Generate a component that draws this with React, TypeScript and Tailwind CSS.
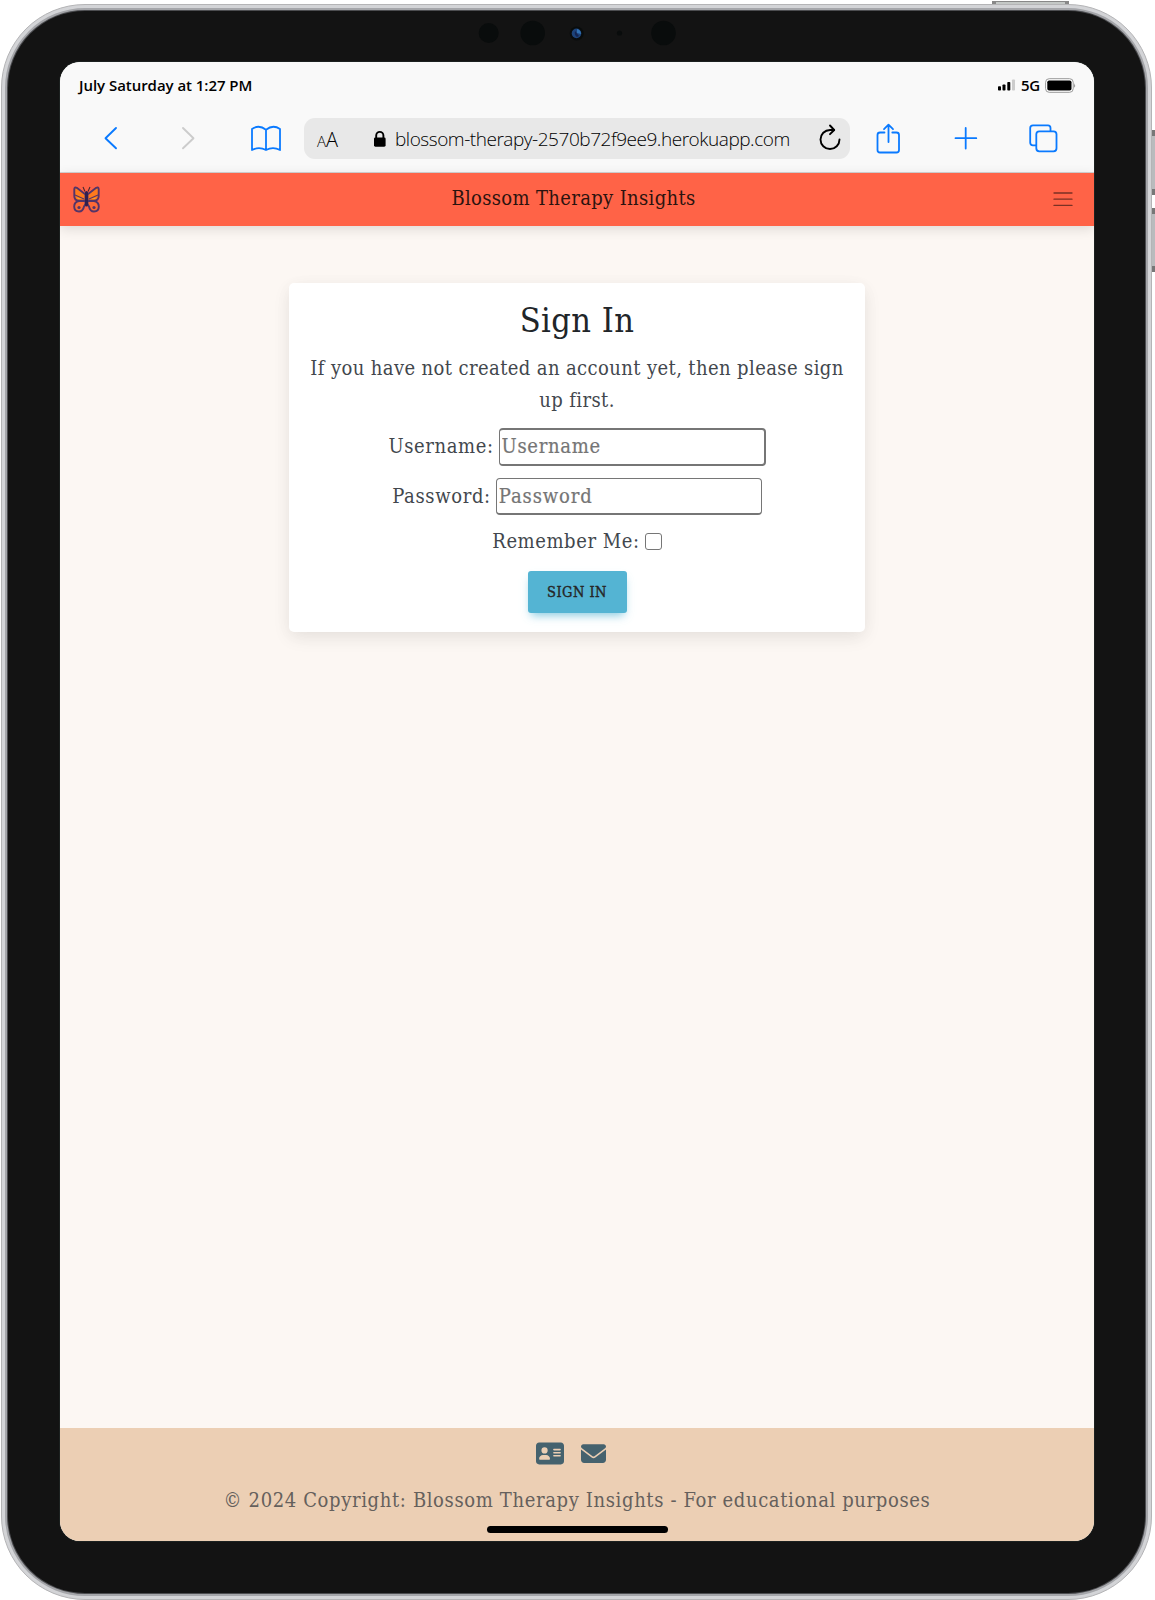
import { FaAddressCard, FaEnvelope } from "react-icons/fa6";

const serif = "font-['DejaVu_Serif_Condensed','DejaVu_Serif',serif] [font-stretch:condensed]";

function Butterfly() {
  return (
    <svg className="h-[27px] w-[27px]" viewBox="0 0 27 27" fill="none" strokeLinejoin="round">
      <g stroke="#553468" strokeWidth="1.9">
        <path d="M12.5 8.5L3.8 1.8Q1.3 .8 1.3 3.2V10Q1.3 14.5 6 14.8H12.5Z" fill="#ff7a1c" />
        <path d="M14.5 8.5L23.2 1.8Q25.7 .8 25.7 3.2V10Q25.7 14.5 21 14.8H14.5Z" fill="#ff7a1c" />
        <path d="M12.5 15H6Q1.2 16 1.2 20.5Q1.2 25.5 6 25.5Q10 25.5 11 20.5L12.5 18Z" fill="#ff6a35" />
        <path d="M14.5 15H21Q25.8 16 25.8 20.5Q25.8 25.5 21 25.5Q17 25.5 16 20.5L14.5 18Z" fill="#ff6a35" />
        <path d="M2 9L11 13M25 9L16 13" strokeWidth="1.1" />
      </g>
      <path d="M4 11.5L9 13H5ZM23 11.5L18 13H22Z" fill="#ffa51e" />
      <path d="M12 5.5L10 1M15 5.5L17 1" stroke="#4a2830" strokeWidth="1.1" />
      <rect x="12" y="5" width="3" height="15.5" rx="1.5" fill="#30204f" />
      <circle cx="6" cy="21.5" r="1.6" fill="#553468" />
      <circle cx="21" cy="21.5" r="1.6" fill="#553468" />
    </svg>
  );
}

function Cameras() {
  return (
    <svg className="absolute left-[470px] top-[14px] h-[38px] w-[216px]" viewBox="470 14 216 38">
      <g fill="#090c0c">
        <circle cx="488.7" cy="33" r="10" />
        <circle cx="532.7" cy="33" r="12.3" />
        <circle cx="576.7" cy="33.5" r="7" />
        <circle cx="619.5" cy="33" r="2.6" />
        <circle cx="663.5" cy="33" r="12.3" />
      </g>
      <circle cx="576.5" cy="33.4" r="4.8" fill="#1d4379" />
      <path d="M577 33L577 29Q581 30 581 34Z" fill="#3172b4" />
      <path d="M575 31Q574 35 577 37L579 36Z" fill="#14244f" />
    </svg>
  );
}

function StatusBar() {
  return (
    <div className="flex h-[46px] items-center justify-between pl-[19px] pr-[18px] font-['Open_Sans',sans-serif] text-[15px] font-semibold text-black">
      <span className="tracking-[-0.04px]">July Saturday at 1:27 PM</span>
      <div className="flex items-center">
        <svg className="h-[12px] w-[18px]" viewBox="0 0 18 12">
          <rect x="0" y="7.3" width="3" height="4.2" rx=".8" />
          <rect x="4.5" y="5.5" width="3" height="6" rx=".8" />
          <rect x="9.3" y="3" width="3" height="8.500" rx=".8" />
          <rect x="14" y="0.5" width="3" height="11" rx=".8" fill="#ccc" />
        </svg>
        <span className="ml-[5px] mr-[5px] text-[15px] tracking-[-0.2px]">5G</span>
        <svg className="h-[15px] w-[31px]" viewBox="0 0 31 15">
          <rect x=".6" y=".7" width="27.6" height="13.6" rx="3.6" fill="#fff" stroke="#999" />
          <rect x="2.3" y="2.5" width="24.2" height="10" rx="1.8" />
          <path d="M29.2 5.2Q31 7.5 29.2 9.8Z" fill="#888" />
        </svg>
      </div>
    </div>
  );
}

function Toolbar() {
  return (
    <div className="mt-[2px] flex h-[63px] items-start border-b border-[#d4d2d2] font-['Open_Sans',sans-serif] font-light text-black">
      <svg className="mt-[7px] h-[40px] w-[244px]" viewBox="60 117 244 40" fill="none" strokeLinecap="round" strokeLinejoin="round" strokeWidth="1.9">
        <path d="M116 128L105.500 138.200L116 148.300" stroke="#0a7aff" />
        <path d="M183 128L193.500 138.200L183 148.300" stroke="#ccc" />
        <path d="M266 129.700Q259 124.200 252 129V150Q259 146.300 266 150Q273 146.300 280 150V129Q273 124.200 266 129.700ZM266 129.700V149.500" stroke="#0a7aff" strokeWidth="1.8" />
      </svg>
      <div className="mt-[8px] flex h-[41px] w-[546px] items-center rounded-[11px] bg-[#e8e8e8]">
        <span className="ml-[13px] mt-[2px] flex w-[23px] items-baseline leading-none"><span className="text-[15px]">A</span><span className="text-[20px]">A</span></span>
        <svg className="ml-[33px] h-[18px] w-[14px]" viewBox="0 0 14 18">
          <path d="M3.200 8V5.500a3.600 3.600 0 0 1 7.200 0V8" fill="none" stroke="#000" strokeWidth="1.900" />
          <rect x="1" y="7.400" width="11.600" height="9.300" rx="1.400" />
        </svg>
        <span className="ml-[8px] mt-[2px] w-[396px] whitespace-nowrap text-[19px] tracking-[-0.46px]">blossom-therapy-2570b72f9ee9.herokuapp.com</span>
        <svg className="-mt-[4px] ml-[27px] h-[26px] w-[24px]" viewBox="0 0 24 26" fill="none" stroke="#000" strokeWidth="1.900" strokeLinecap="round" strokeLinejoin="round">
          <path d="M16 6H12A9.500 9.500 0 1 0 21.500 15.500" />
          <path d="M12 1.500L16.200 6L12 10.200" />
        </svg>
      </div>
      <svg className="mt-[7px] h-[40px] w-[244px]" viewBox="850 117 244 40" fill="none" stroke="#0a7aff" strokeWidth="1.800" strokeLinecap="round" strokeLinejoin="round">
        <path d="M884.500 132.500H880Q877.500 132.500 877.500 135V150Q877.500 152.500 880 152.500H896.500Q899 152.500 899 150V135Q899 132.500 896.500 132.500H892.300M888.500 142V125M884 129.200L888.500 124.700L893 129.200" />
        <path d="M955.500 138.200H976.300M965.700 128V148.500" />
        <path d="M1036 145.300H1033Q1030.200 145.300 1030.200 142.500V128Q1030.200 125.400 1033 125.400H1048Q1050.500 125.400 1050.500 128V131" />
        <rect x="1036.300" y="131.300" width="20.200" height="20" rx="3" />
      </svg>
    </div>
  );
}

function SignInCard() {
  return (
    <section className="flex h-[349px] w-[576px] flex-col items-center rounded-[5px] bg-white text-[20px] leading-[32px] text-[#42474d] shadow-[0_6px_18px_rgba(0,0,0,0.07),0_3px_20px_-2px_rgba(0,0,0,0.04)]">
      <h2 className="mt-[17px] h-[40px] text-[34px] leading-[40px] tracking-[0.45px] text-[#212529]">Sign In</h2>
      <p className="mt-[12px] w-[560px] whitespace-nowrap text-center tracking-[0.39px]">If you have not created an account yet, then please sign<br />up first.</p>
      <label className="mt-[12px] flex h-[38px] items-center">
        <span className="-mt-[2px] tracking-[0.6px]">Username:</span>
        <input placeholder="Username" className="ml-[5px] h-[38px] w-[267px] rounded-[4px] border-2 border-l border-[#767676] px-[2px] pb-[2px] tracking-[0.7px] placeholder:text-[#757575] placeholder:[-webkit-text-stroke:0.2px_#757575]" />
      </label>
      <label className="mt-[12px] flex h-[37px] items-center">
        <span className="-mt-[2px] tracking-[0.65px]">Password:</span>
        <input type="password" placeholder="Password" className="ml-[5px] h-[37px] w-[266px] rounded-[4px] border border-b-2 border-[#767676] px-[2px] pb-px tracking-[0.9px] placeholder:text-[#757575] placeholder:[-webkit-text-stroke:0.2px_#757575]" />
      </label>
      <label className="mt-[10px] flex h-[32px] items-center">
        <span className="tracking-[0.57px]">Remember Me:</span>
        <input type="checkbox" className="ml-[5px] h-[17px] w-[17px] appearance-none rounded-[3px] border border-[#767676]" />
      </label>
      <button className="mt-[14px] h-[42px] w-[99px] rounded-[3px] bg-[#54b4d3] text-[14.500px] tracking-[0.45px] text-[#262626] shadow-[0_5px_9px_-3px_rgba(84,180,211,0.75)] [-webkit-text-stroke:0.35px_#262626]">SIGN IN</button>
    </section>
  );
}

export default function App() {
  return (
    <div className="relative h-[1600px] w-[1155px] overflow-hidden bg-white">
      <div className="absolute left-[992px] top-px h-[5px] w-[77px] border-x-4 border-t border-[#888] bg-[#c4c8c6]" />
      <div className="absolute left-[1151px] top-[130px] h-[65px] w-[4px] border-y-[6px] border-[#777] bg-[#b9bbbd]" />
      <div className="absolute left-[1151px] top-[208px] h-[64px] w-[4px] border-y-[6px] border-[#777] bg-[#b9bbbd]" />
      <div className="relative ml-px mt-1 h-[1596px] w-[1151px] rounded-[84px] border border-[#b4b4b6] bg-[#d3d4d7] p-[3px]">
        <div className="h-full w-full rounded-[80px] border-2 border-[#a5a6aa] bg-[#4c4d50] p-px">
          <div className="h-full w-full rounded-[77px] bg-[#131313]" />
        </div>
      </div>
      <Cameras />
      <main className={`absolute left-[60px] top-[62px] flex h-[1479px] w-[1034px] flex-col overflow-hidden rounded-[20px] bg-[#fcf7f3] shadow-[0_0_0_1px_#1c2120] ${serif}`}>
        <header className="shrink-0 bg-[#f9f9f9] [font-stretch:normal]">
          <StatusBar />
          <Toolbar />
        </header>
        <nav className="flex h-[53px] shrink-0 items-center bg-[#ff6347] pl-[13px] pr-[21px] shadow-[0_3px_12px_rgba(0,0,0,0.12)]">
          <Butterfly />
          <span className="flex-1 -translate-x-[3px] -translate-y-[2px] text-center text-[20px] tracking-[0.34px] text-[#2b130f]">Blossom Therapy Insights</span>
          <svg className="-mt-[2px] h-[16px] w-[20px]" viewBox="0 0 20 16" stroke="#7b3124" strokeWidth="1.300" strokeLinecap="round">
            <path d="M1 2H19M1 8.200H19M1 14.400H19" />
          </svg>
        </nav>
        <div className="flex flex-1 justify-center pt-[57px]">
          <SignInCard />
        </div>
        <footer className="relative flex h-[113px] shrink-0 flex-col items-center bg-[#eccfb4]">
          <div className="mt-[13px] flex h-[25px] items-center gap-[17px] pr-[13px] text-[#45626e]">
            <FaAddressCard className="h-[25px] w-[28px]" />
            <FaEnvelope className="h-[25px] w-[25px]" />
          </div>
          <p className="mt-[18px] whitespace-nowrap text-[20px] leading-[32px] tracking-[0.63px] text-[#65605c]">© 2024 Copyright: Blossom Therapy Insights - For educational purposes</p>
          <div className="absolute bottom-[8px] left-[427px] h-[7px] w-[181px] rounded-full bg-black" />
        </footer>
      </main>
    </div>
  );
}
